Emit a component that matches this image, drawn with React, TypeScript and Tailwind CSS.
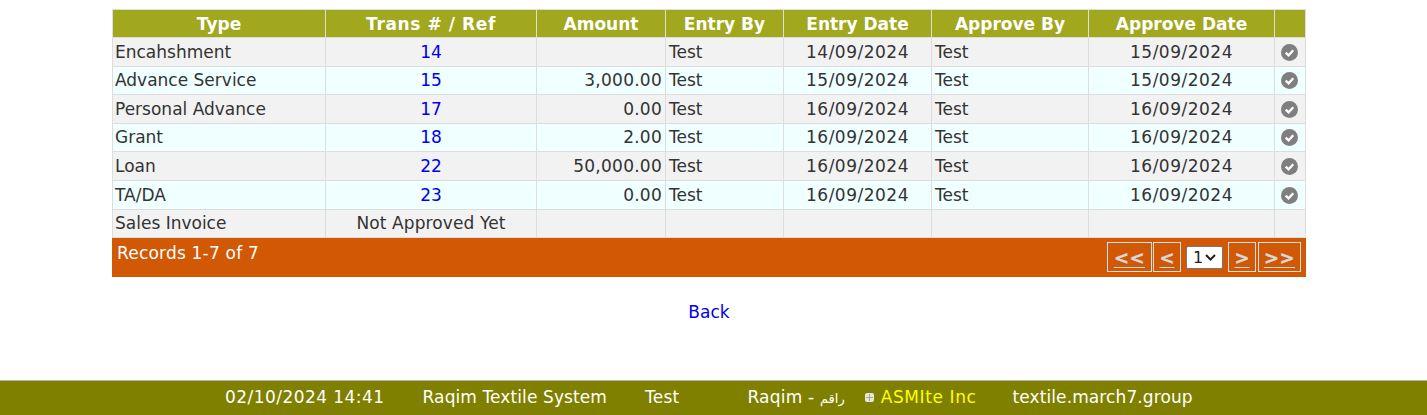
import React from 'react';

const rows = [
    { type: "Encahshment", ref: "14", amount: "", by: "Test", date: "14/09/2024", approver: "Test", approved: "15/09/2024" },
    { type: "Advance Service", ref: "15", amount: "3,000.00", by: "Test", date: "15/09/2024", approver: "Test", approved: "15/09/2024" },
    { type: "Personal Advance", ref: "17", amount: "0.00", by: "Test", date: "16/09/2024", approver: "Test", approved: "16/09/2024" },
    { type: "Grant", ref: "18", amount: "2.00", by: "Test", date: "16/09/2024", approver: "Test", approved: "16/09/2024" },
    { type: "Loan", ref: "22", amount: "50,000.00", by: "Test", date: "16/09/2024", approver: "Test", approved: "16/09/2024" },
    { type: "TA/DA", ref: "23", amount: "0.00", by: "Test", date: "16/09/2024", approver: "Test", approved: "16/09/2024" },
];

const headers = ["Type", "Trans # / Ref", "Amount", "Entry By", "Entry Date", "Approve By", "Approve Date", ""];
const widths = [213, 211, 129, 118, 148, 157, 186, 31];
const rowHeights = ["h-[29px]", "h-[28px] [&>td]:pb-[1px]", "h-[29px]", "h-[28px] [&>td]:pb-[1px]", "h-[29px]", "h-[29px]"];

const cell = "border border-[#dddddd] px-[3px] py-0 leading-[20px]";
const dateCell = `${cell} text-center tracking-[0.5px]`;

const CheckIcon = () => (
    <svg width="17" height="17" viewBox="0 0 18 18" className="ml-[3px] block">
        <circle cx="9" cy="9" r="9" fill="#7f7f7f" />
        <path d="M5 9.2 L8 12 L13 6.5" fill="none" stroke="#ffffff" strokeWidth="2.4" />
    </svg>
);

const PagerButton = ({ label, className }: { label: string; className: string }) => (
    <a className={`flex h-[30px] items-center justify-center border border-[#e0e0e0] text-[18px] font-bold text-[#d9d9d9] underline underline-offset-[3px] [-webkit-text-stroke:0.4px_#d9d9d9] ${className}`}>
        {label}
    </a>
);

const App = () => {
    return (
        <div className="flex h-[415px] flex-col overflow-hidden bg-white font-['DejaVu_Sans',Verdana,sans-serif] text-[17px] text-[#333333]">
            <div className="ml-[112px] mt-[9px] w-[1194px]">
                <table className="w-[1193px] table-fixed border-collapse">
                    <colgroup>
                        {widths.map((w, i) => (
                            <col key={i} style={{ width: w }} />
                        ))}
                    </colgroup>
                    <thead>
                        <tr className="h-[28px] bg-[#a1a81e] text-white">
                            {headers.map((h, i) => (
                                <th key={i} className={`${cell} text-center font-bold ${i === 1 ? "tracking-[0.6px]" : ""}`}>{h}</th>
                            ))}
                        </tr>
                    </thead>
                    <tbody>
                        {rows.map((row, i) => (
                            <tr key={row.ref} className={`${rowHeights[i]} ${i % 2 === 0 ? "bg-[#f2f2f2]" : "bg-[#f0ffff]"}`}>
                                <td className={`${cell} pl-[2px]`}>{row.type}</td>
                                <td className={`${cell} text-center text-[#0000ee]`}>{row.ref}</td>
                                <td className={`${cell} text-right tracking-[0.25px]`}>{row.amount}</td>
                                <td className={cell}>{row.by}</td>
                                <td className={dateCell}>{row.date}</td>
                                <td className={cell}>{row.approver}</td>
                                <td className={dateCell}>{row.approved}</td>
                                <td className={cell}><CheckIcon /></td>
                            </tr>
                        ))}
                        <tr className="h-[28px] bg-[#f2f2f2] [&>td]:pb-[1px]">
                            <td className={`${cell} pl-[2px]`}>Sales Invoice</td>
                            <td className={`${cell} text-center tracking-[0.1px]`}>Not Approved Yet</td>
                            <td className={cell}></td>
                            <td className={cell}></td>
                            <td className={cell}></td>
                            <td className={cell}></td>
                            <td className={cell}></td>
                            <td className={cell}></td>
                        </tr>
                    </tbody>
                </table>
                <div className="flex h-[39px] justify-between bg-[#d15804] pl-[5px] pr-[5px] text-white">
                    <span className="mt-[5px] leading-[20px] tracking-[0.2px]">Records 1-7 of 7</span>
                    <div className="mt-[4px] flex">
                        <PagerButton label="<<" className="w-[45px] tracking-[0.5px]" />
                        <PagerButton label="<" className="ml-[1px] w-[28px]" />
                        <div className="mx-[5px] mt-[4px] flex h-[23px] w-[37px] items-center justify-between rounded-[2px] border border-[#767676] bg-white pl-[6px] pr-[6px] text-[16px] text-[#222222]">
                            1
                            <svg width="11" height="7" viewBox="0 0 11 7" className="shrink-0"><path d="M1 1 L5.5 5.5 L10 1" fill="none" stroke="#222222" strokeWidth="2" /></svg>
                        </div>
                        <PagerButton label=">" className="w-[28px]" />
                        <PagerButton label=">>" className="ml-[2px] w-[43px] tracking-[0.5px]" />
                    </div>
                </div>
            </div>
            <div className="ml-[112px] mt-[25px] w-[1194px] text-center leading-[20px] text-[#0000ee]">Back</div>
            <div className="mt-auto flex h-[35px] items-center border-t border-t-[#b5b5a0] bg-[#808000] pl-[225px] text-white">
                <span className="tracking-[0.45px]">02/10/2024 14:41</span>
                <span className="ml-[38px] tracking-[0.1px]">Raqim Textile System</span>
                <span className="ml-[38px] tracking-[0.25px]">Test</span>
                <span className="ml-[68px] tracking-[0.2px]">Raqim - <span className="text-[13px]">راقم</span></span>
                <svg width="9" height="9" viewBox="0 0 9 9" className="-mt-[1px] ml-[20px] mr-[7px]">
                    <rect x="0" y="0" width="9" height="9" rx="2" fill="#e6e6e6" />
                    <path d="M4.5 1 V8 M1 4.5 H8" stroke="#a9a97a" strokeWidth="1" />
                </svg>
                <span className="tracking-[0.6px] text-[#ffff00]">ASMIte Inc</span>
                <span className="ml-[36px] tracking-[0.1px]">textile.march7.group</span>
            </div>
        </div>
    );
};

export default App;
